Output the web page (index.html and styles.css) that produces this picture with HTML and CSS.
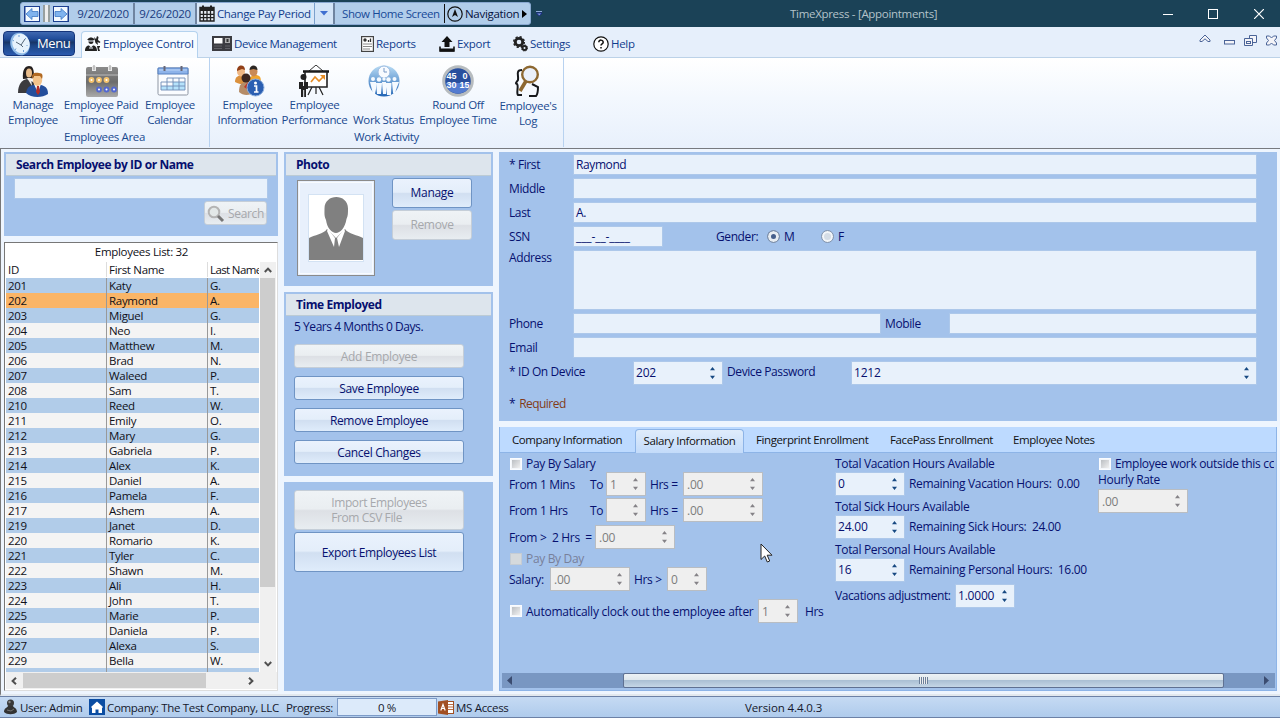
FILE: index.html
```html
<!DOCTYPE html>
<html lang="en">
<head>
<meta charset="utf-8">
<title>TimeXpress - [Appointments]</title>
<link rel="stylesheet" href="styles.css">
</head>
<body>
<svg class="defs" width="0" height="0">
  <defs>
    <linearGradient id="blueGrad" x1="0" y1="0" x2="0" y2="1"><stop offset="0" stop-color="#b9dcf5"/><stop offset="1" stop-color="#1f63b4"/></linearGradient>
    <linearGradient id="grayGrad" x1="0" y1="0" x2="0" y2="1"><stop offset="0" stop-color="#8b8b8b"/><stop offset=".5" stop-color="#6c6c6c"/><stop offset="1" stop-color="#aaaaaa"/></linearGradient>
    <symbol id="updown" viewBox="0 0 7 14"><path d="M3.500 1L6 4.200H1zM3.500 13L1 9.800h5z"/></symbol>
    <symbol id="chev" viewBox="0 0 8 6"><path d="M.8 5L4 1.600 7.200 5" fill="none" stroke="#505050" stroke-width="2"/></symbol>
  </defs>
</svg>
<div class="window">
  <header class="titlebar">
    <div class="qat">
      <svg class="q-arrow" viewBox="0 0 16 16"><rect width="16" height="16" fill="#1b3f91"/><rect x="1.500" y="1" width="13.500" height="14" fill="#f4faff"/><path d="M2 8l6-5.500v3h6v5H8v3z" fill="#7fb3ee" stroke="#3d79c4" stroke-width=".8"/></svg>
      <span class="q-grip"></span>
      <svg class="q-arrow" viewBox="0 0 16 16"><rect width="16" height="16" fill="#1b3f91"/><rect x="1" y="1" width="13.500" height="14" fill="#f4faff"/><path d="M14 8L8 2.500v3H2v5h6v3z" fill="#7fb3ee" stroke="#3d79c4" stroke-width=".8"/></svg>
      <span class="q-date">9/20/2020</span><i class="q-sep"></i>
      <span class="q-date q-date2">9/26/2020</span><i class="q-sep"></i>
      <span class="q-period">
        <svg width="16" height="17" viewBox="0 0 16 17"><path d="M1 2.500h14V16H1z" fill="#e9eef5" stroke="#222" stroke-width="1.400"/><path d="M1 2.500h14v3.500H1zM3 .5h2v3H3zM11 .5h2v3h-2z" fill="#222"/><path d="M1 9.300h14M1 12.700h14M4.500 6v10M8 6v10M11.500 6v10" stroke="#222" stroke-width="1.300"/></svg>
        <span>Change Pay Period</span>
      </span>
      <span class="q-drop"><svg width="8" height="5" viewBox="0 0 8 5"><path d="M0 0h8L4 4.500z" fill="#3f6fd0"/></svg></span>
      <i class="q-sep q-sep2"></i>
      <span class="q-home">Show Home Screen</span><i class="q-sep3"></i>
      <svg class="q-nav-icon" width="16" height="16" viewBox="0 0 16 16"><circle cx="8" cy="8" r="7.200" fill="none" stroke="#111" stroke-width="1.200"/><path d="M8 3l3 8-3-2-3 2z" fill="#111"/></svg>
      <span class="q-nav">Navigation</span>
      <svg width="5" height="8" viewBox="0 0 5 8"><path d="M0 0l5 4-5 4z" fill="#000"/></svg>
    </div>
    <svg class="q-more" width="7" height="6" viewBox="0 0 7 6"><path d="M0 .5h6" stroke="#8fa9d8"/><path d="M.5 2h5.500L3.300 5z" stroke="#14218a" fill="#7f9ad0" stroke-width=".8"/></svg>
    <span class="title">TimeXpress - [Appointments]</span>
    <div class="winbtns">
      <svg width="10" height="10" viewBox="0 0 10 10"><path d="M0 5.500h10" stroke="#fff"/></svg>
      <svg width="10" height="10" viewBox="0 0 10 10"><rect x=".5" y=".5" width="9" height="9" fill="none" stroke="#fff"/></svg>
      <svg width="10" height="10" viewBox="0 0 10 10"><path d="M0 0l10 10M10 0L0 10" stroke="#fff" stroke-width="1.200"/></svg>
    </div>
  </header>

  <nav class="tabs">
    <span class="menu"><svg width="24" height="24" viewBox="0 0 24 24"><ellipse cx="12" cy="12" rx="9.500" ry="11.500" transform="rotate(-20 12 12)" fill="#8ebbe8"/><ellipse cx="13" cy="11.500" rx="8.500" ry="10" transform="rotate(-20 13 11.500)" fill="#e6f2fc"/><path d="M8 10l5 3 4-6M13 13l2 2" fill="none" stroke="#567" stroke-width="1"/><path d="M11 3v2M4.500 8l1.500 1M7 18l1-1.500M15.500 20v-2M19.500 14l-1-1M18 6l-1 1" stroke="#6fa0d4"/></svg>Menu</span>
    <span class="tab-active"><svg width="16" height="16" viewBox="0 0 16 16"><path d="M3 3c1-2 5-2 6 0l.8 1H8.500c.3 3-1 4-2.500 4S3.200 7 3.300 4H2z" fill="#222"/><path d="M0 15c0-4 2-5.500 4-5.500l2 2 2-2c2 0 4 1.500 4 5.500z" fill="#222"/><path d="M9 1l2 2 1-3 1.500 1L13 4l2.500 2-1 1-2-1 .5 3-2.500-2zM12 10h3v1l-1 1 1 3h-2z" fill="#222"/><path d="M3 5h6M4 12h4" stroke="#edf4fc"/></svg>Employee Control</span>
    <span class="tab t-device"><svg width="20" height="15" viewBox="0 0 20 15"><rect width="20" height="15" fill="#3b3b40"/><rect x="2" y="2" width="8.500" height="5.500" fill="#fff"/><rect x="13" y="2" width="5" height="5" fill="#aaa"/><rect x="14.500" y="3" width="2" height="3" fill="#333"/><path d="M2 10h8M2 12.500h8M13 10h5M13 12.500h5" stroke="#6c6c72" stroke-width=".8"/></svg>Device Management</span>
    <span class="tab t-reports"><svg width="13" height="16" viewBox="0 0 13 16"><rect x=".6" y=".6" width="11.800" height="14.800" fill="#fff" stroke="#444" stroke-width="1.200"/><circle cx="4" cy="4" r="1.700" fill="#333"/><path d="M7.500 6V4M9.500 6V2.500" stroke="#333" stroke-width="1.300"/><path d="M2 8h9M2 10.500h9M2 13h7" stroke="#888"/></svg>Reports</span>
    <span class="tab t-export"><svg width="16" height="16" viewBox="0 0 16 16"><path d="M8 0l5.500 6H10.500v5h-5V6H2.500z" fill="#111"/><path d="M1 10.500V15h14v-4.500" fill="none" stroke="#111" stroke-width="1.600"/><path d="M1 14h14" stroke="#111" stroke-width="3"/></svg>Export</span>
    <span class="tab t-settings"><svg width="15" height="16" viewBox="0 0 15 16"><circle cx="6" cy="6" r="3.700" fill="none" stroke="#222" stroke-width="2.800"/><circle cx="6" cy="6" r="5.300" fill="none" stroke="#222" stroke-width="1.500" stroke-dasharray="2.200 1.960"/><circle cx="11.500" cy="12" r="2" fill="#e6effb" stroke="#222" stroke-width="2"/><circle cx="11.500" cy="12" r="3" fill="none" stroke="#222" stroke-dasharray="1.300 1.050"/></svg>Settings</span>
    <span class="tab t-help"><svg width="16" height="16" viewBox="0 0 16 16"><circle cx="8" cy="8" r="7.200" fill="#fff" stroke="#111" stroke-width="1.200"/><path d="M5.800 6.300c0-3 4.500-2.800 4.400 0C10.200 8 8 7.800 8 9.600M8 11v1.500" fill="none" stroke="#111" stroke-width="1.500"/></svg>Help</span>
    <svg class="mdi" width="80" height="14" viewBox="0 0 80 14"><g fill="#f4f4f8" stroke="#4b6498"><path d="M1 7l5-5 5 5v1.500H9L6 5.800 3 8.500H1z"/><rect x="25.500" y="7.500" width="10" height="3.500"/><path d="M50.500 2.500h7v7h-7z"/><path d="M45.500 5.500h8v7h-8z"/><rect x="47.500" y="8.500" width="4" height="2"/><path d="M67.500 3h3l2 2 2-2h3v2l-2 2.500 2 2.500v2h-3l-2-2-2 2h-3v-2l2-2.500-2-2.500z"/></g></svg>
  </nav>

  <section class="ribbon">
    <div class="group g1">
      <div class="items">
        <div class="item i1"><svg width="32" height="32" viewBox="0 0 32 32"><path d="M6 14C5 5 8 1 12 1s5 3 5 12z" fill="#25201f"/><ellipse cx="12" cy="8" rx="3" ry="4.500" fill="#e9bd8c"/><path d="M1 28c0-9 4-13 9-14l8 4v10z" fill="#3b3b3e"/><path d="M10 13h4l1 8z" fill="#f2ede8"/><path d="M9 28c1-6 4-8 9-8h6c5 1 7 4 7 9-6 4-17 4-22-1z" fill="#234e9c"/><path d="M17 19h7l-3 9z" fill="#fff"/><path d="M20 21h2l1 6-2 3-2-3z" fill="#b42d25"/><ellipse cx="20.500" cy="15" rx="4.700" ry="6" fill="#f3c38a"/><path d="M15 14c-1-6 3-7 7-6 4 0 4 3 3 6l-2-3-6 0z" fill="#b16922"/></svg><span>Manage<br>Employee</span></div>
        <div class="item i2"><svg width="32" height="32" viewBox="0 0 32 32"><rect y="2" width="32" height="30" rx="2" fill="url(#grayGrad)"/><path d="M0 10h32" stroke="#bbb"/><path d="M8 1v5M24 1v5" stroke="#e8e8e8" stroke-width="4"/><path d="M8 0v5M24 0v5" stroke="#999"/><g fill="#f4c36d"><circle cx="5.500" cy="15" r="2.900"/><circle cx="13" cy="15" r="2.900"/><circle cx="20.500" cy="15" r="2.900"/></g><g fill="#5268d0"><circle cx="13" cy="24.500" r="2.900"/><circle cx="20.500" cy="24.500" r="2.900"/><circle cx="28" cy="24.500" r="2.900"/></g><g fill="#fff"><circle cx="5.500" cy="15" r="1"/><circle cx="13" cy="15" r="1"/><circle cx="20.500" cy="15" r="1"/><circle cx="13" cy="24.500" r="1"/><circle cx="20.500" cy="24.500" r="1"/><circle cx="28" cy="24.500" r="1"/></g></svg><span>Employee Paid<br>Time Off</span></div>
        <div class="item i3"><svg width="32" height="32" viewBox="0 0 32 32"><rect x="1" y="3" width="30" height="27" rx="1.500" fill="#fafcff" stroke="#8e96a3"/><path d="M1 3h30v6H1z" fill="#8db3ea" stroke="#5580c2"/><path d="M2 5h28" stroke="#bcd5f7"/><path d="M7.500 1v5M24.500 1v5" stroke="#667" stroke-width="2"/><path d="M4 21h24v4H4zM16 17h12v4H16z" fill="#b5e2fb"/><path d="M10 13h18v12H4v-8h24M4 21h24M10 13v12M16 13v12M22 13v12" fill="none" stroke="#6f8db5" stroke-width=".9"/></svg><span>Employee<br>Calendar</span></div>
      </div>
      <div class="caption">Employees Area</div>
    </div>
    <div class="group g2">
      <div class="items">
        <div class="item i4"><svg width="32" height="32" viewBox="0 0 32 32"><path d="M1 17c0-5 3-7 8-7s8 2 8 8c-5 2-11 2-16-1z" fill="#db913d"/><path d="M15 17c0-5 3-7 6-7 5 0 6 2 6 8z" fill="#f0a52d"/><ellipse cx="7" cy="6.500" rx="4" ry="5" fill="#efb783"/><path d="M3 6c0-7 8-7 8-1L8 4z" fill="#913f18"/><ellipse cx="19.500" cy="6.500" rx="4" ry="5" fill="#c98a55"/><path d="M15.500 5c0-6 8-6 8 0l-4-1z" fill="#2b2623"/><path d="M5 27c0-8 3-10 8-10s7 4 7 10c-4 4-11 4-15 0z" fill="#b58c68"/><circle cx="12" cy="13" r="4.500" fill="#3d2720"/><path d="M10 22l4-5 2 9z" fill="#c03525"/><circle cx="21.500" cy="22.500" r="8.500" fill="#2b5fb2" stroke="#8fb1de"/><circle cx="21.500" cy="18" r="1.500" fill="#fff"/><path d="M20 21h2.500v6M20 27h4.500" fill="none" stroke="#fff" stroke-width="1.700"/></svg><span>Employee<br>Information</span></div>
        <div class="item i5"><svg width="32" height="32" viewBox="0 0 32 32"><path d="M10 6l7-6 7 6" fill="none" stroke="#333"/><path d="M4 6.500h26" stroke="#111" stroke-width="2.500"/><path d="M6 7v15h22V7z" fill="#fff" stroke="#222" stroke-width="1.600"/><path d="M12 17l4-5 4 4 5-5" fill="none" stroke="#e68d25" stroke-width="1.600"/><path d="M21 10h5v5z" fill="#e68d25"/><path d="M13 22l-4 8M20 22l4 8M17 22v7" stroke="#222" stroke-width="1.200"/><circle cx="4.500" cy="12" r="3" fill="#222"/><path d="M0 24v-7h9v7H7v8H5.200v-7h-1v7H2v-8z" fill="#222"/><path d="M4.500 17v4" stroke="#eee"/></svg><span>Employee<br>Performance</span></div>
        <div class="item i6"><svg width="32" height="32" viewBox="0 0 32 32"><circle cx="16" cy="16" r="15.500" fill="url(#blueGrad)"/><circle cx="16" cy="7" r="6" fill="#f8fbff" stroke="#9dbbe0"/><path d="M16 3v4h3" fill="none" stroke="#7898c5"/><g fill="#f5faff"><circle cx="5" cy="14" r="2"/><path d="M2 17h6v7l-1 5H5z"/><circle cx="11" cy="14.500" r="2.200"/><path d="M8 18h6l-1 11H9z"/><circle cx="20.500" cy="14.500" r="2.200"/><path d="M17.500 18h6l-.5 12h-4z"/><circle cx="26.500" cy="14" r="2"/><path d="M24 17h7l-2 5-2 6h-2z"/><circle cx="16" cy="14" r="1.700"/><path d="M14 17h4v12h-3z"/></g></svg><span><br>Work Status</span></div>
        <div class="item i7"><svg width="32" height="32" viewBox="0 0 32 32"><circle cx="16" cy="16" r="14.300" fill="#294f9e" stroke="#b7bcbf" stroke-width="3"/><path d="M4 18h24c-1 14-23 14-24 0" fill="#537bd0"/><g class="dial"><text x="4.500" y="14">45</text><text x="20.500" y="14">0</text><text x="4.500" y="23">30</text><text x="17.500" y="23">15</text></g></svg><span>Round Off<br>Employee Time</span></div>
        <div class="item i8"><svg width="32" height="32" viewBox="0 0 32 32"><path d="M10 5C3 5 7 11 6 15c-2 3-3 3-1 4 2 2-1 9 1 11h4M17 31h7c2-2 2-6 2-9l-6-3" fill="none" stroke="#17191c" stroke-width="2"/><circle cx="18" cy="9.500" r="7.800" fill="#eaf0fa" stroke="#8d6831" stroke-width="2.400"/><path d="M14 16L8 26" stroke="#8d6831" stroke-width="3.600"/></svg><span>Employee's<br>Log</span></div>
      </div>
      <div class="caption">Work Activity</div>
    </div>
  </section>

  <main class="workspace">
    <div class="col-left">
      <section class="panel search-panel">
        <h2>Search Employee by ID or Name</h2>
        <div class="field search-input"></div>
        <div class="btn disabled search-btn"><svg width="18" height="18" viewBox="0 0 18 18"><circle cx="7" cy="7" r="5.300" fill="#e3e8e8" stroke="#b4b4b4" stroke-width="2"/><path d="M11 11l5 5" stroke="#777" stroke-width="3"/></svg>Search</div>
      </section>
      <section class="list">
        <div class="list-title">Employees List: 32</div>
        <div class="list-body">
          <div class="list-grid">
            <div class="lr head"><span>ID</span><span>First Name</span><span>Last Name</span></div>
            <div class="lr"><span>201</span><span>Katy</span><span>G.</span></div>
            <div class="lr selected"><span>202</span><span>Raymond</span><span>A.</span></div>
            <div class="lr"><span>203</span><span>Miguel</span><span>G.</span></div>
            <div class="lr"><span>204</span><span>Neo</span><span>I.</span></div>
            <div class="lr"><span>205</span><span>Matthew</span><span>M.</span></div>
            <div class="lr"><span>206</span><span>Brad</span><span>N.</span></div>
            <div class="lr"><span>207</span><span>Waleed</span><span>P.</span></div>
            <div class="lr"><span>208</span><span>Sam</span><span>T.</span></div>
            <div class="lr"><span>210</span><span>Reed</span><span>W.</span></div>
            <div class="lr"><span>211</span><span>Emily</span><span>O.</span></div>
            <div class="lr"><span>212</span><span>Mary</span><span>G.</span></div>
            <div class="lr"><span>213</span><span>Gabriela</span><span>P.</span></div>
            <div class="lr"><span>214</span><span>Alex</span><span>K.</span></div>
            <div class="lr"><span>215</span><span>Daniel</span><span>A.</span></div>
            <div class="lr"><span>216</span><span>Pamela</span><span>F.</span></div>
            <div class="lr"><span>217</span><span>Ashem</span><span>A.</span></div>
            <div class="lr"><span>219</span><span>Janet</span><span>D.</span></div>
            <div class="lr"><span>220</span><span>Romario</span><span>K.</span></div>
            <div class="lr"><span>221</span><span>Tyler</span><span>C.</span></div>
            <div class="lr"><span>222</span><span>Shawn</span><span>M.</span></div>
            <div class="lr"><span>223</span><span>Ali</span><span>H.</span></div>
            <div class="lr"><span>224</span><span>John</span><span>T.</span></div>
            <div class="lr"><span>225</span><span>Marie</span><span>P.</span></div>
            <div class="lr"><span>226</span><span>Daniela</span><span>P.</span></div>
            <div class="lr"><span>227</span><span>Alexa</span><span>S.</span></div>
            <div class="lr"><span>229</span><span>Bella</span><span>W.</span></div>
            <div class="lr"><span></span><span></span><span></span></div>
          </div>
          <div class="vscroll"><svg width="8" height="6"><use href="#chev"/></svg><i></i><svg class="down" width="8" height="6"><use href="#chev"/></svg></div>
        </div>
        <div class="hscroll"><svg class="left" width="8" height="6"><use href="#chev"/></svg><i></i><svg class="right" width="8" height="6"><use href="#chev"/></svg></div>
      </section>
    </div>

    <div class="col-mid">
      <section class="panel photo-panel">
        <h2>Photo</h2>
        <div class="photo-row">
          <div class="photo"><svg width="54" height="66" viewBox="0 0 54 66"><rect width="54" height="66" fill="#fff"/><path d="M0 65V43c5-3 15-4 18-9l9 9 9-9c3 5 13 6 18 9v22z" fill="#808080"/><path d="M19 34l-1 2 7 16 1-9zM35 34l1 2-6 16-2-9z" fill="#fff"/><path d="M15.500 14C15-2 39.500-2 39 14c0 4 0 7-1.500 10C36 33 31 38 27 38s-9-5-10-13c-2-4-1.500-7-1.500-11z" fill="#808080"/></svg></div>
          <div class="photo-btns"><div class="btn">Manage</div><div class="btn disabled">Remove</div></div>
        </div>
      </section>
      <section class="panel time-panel">
        <h2>Time Employed</h2>
        <p>5 Years 4 Months 0 Days.</p>
        <div class="stack"><div class="btn disabled">Add Employee</div><div class="btn">Save Employee</div><div class="btn">Remove Employee</div><div class="btn">Cancel Changes</div></div>
      </section>
      <section class="panel io-panel">
        <div class="btn disabled tall"><span>Import Employees<br>From CSV File</span></div>
        <div class="btn tall">Export Employees List</div>
      </section>
    </div>

    <div class="col-right">
      <section class="panel form">
        <div class="fr"><label>* First</label><div class="field">Raymond</div></div>
        <div class="fr"><label>Middle</label><div class="field"></div></div>
        <div class="fr"><label>Last</label><div class="field">A.</div></div>
        <div class="fr ssn"><label>SSN</label><div class="field ssn-mask">___-__-____</div><label>Gender:</label><i class="radio on"></i><label>M</label><i class="radio"></i><label>F</label></div>
        <div class="fr address"><label>Address</label><div class="field"></div></div>
        <div class="fr phone"><label>Phone</label><div class="field"></div><label>Mobile</label><div class="field"></div></div>
        <div class="fr"><label>Email</label><div class="field"></div></div>
        <div class="fr device"><label>* ID On Device</label><div class="field spin">202<svg><use href="#updown"/></svg></div><label>Device Password</label><div class="field spin">1212<svg><use href="#updown"/></svg></div></div>
        <div class="required"><label>*</label><span>Required</span></div>
      </section>

      <section class="tabpanel">
        <div class="strip"><span class="s1">Company Information</span><span class="s2 on">Salary Information</span><span class="s3">Fingerprint Enrollment</span><span class="s4">FacePass Enrollment</span><span class="s5">Employee Notes</span></div>
        <div class="tabbody">
          <div class="pay">
            <div class="pr check"><i class="box"></i><span>Pay By Salary</span></div>
            <div class="pr r1"><span>From 1 Mins</span><span>To</span><div class="spin off">1<svg><use href="#updown"/></svg></div><span>Hrs =</span><div class="spin off">.00<svg><use href="#updown"/></svg></div></div>
            <div class="pr r2"><span>From 1 Hrs</span><span>To</span><div class="spin off"><b></b><svg><use href="#updown"/></svg></div><span>Hrs =</span><div class="spin off">.00<svg><use href="#updown"/></svg></div></div>
            <div class="pr r3"><span>From &gt;&nbsp; 2 Hrs&nbsp; =</span><div class="spin off">.00<svg><use href="#updown"/></svg></div></div>
            <div class="pr check dim"><i class="box"></i><span>Pay By Day</span></div>
            <div class="pr r4"><span>Salary:</span><div class="spin off">.00<svg><use href="#updown"/></svg></div><span>Hrs &gt;</span><div class="spin off">0<svg><use href="#updown"/></svg></div></div>
            <div class="pr r5"><i class="box"></i><span class="auto">Automatically clock out the employee after</span><div class="spin off">1<svg><use href="#updown"/></svg></div><span>Hrs</span></div>
          </div>
          <div class="hours">
            <span>Total Vacation Hours Available</span>
            <div class="hr"><div class="field spin">0<svg><use href="#updown"/></svg></div><span>Remaining Vacation Hours:&nbsp; 0.00</span></div>
            <span>Total Sick Hours Available</span>
            <div class="hr"><div class="field spin">24.00<svg><use href="#updown"/></svg></div><span>Remaining Sick Hours:&nbsp; 24.00</span></div>
            <span>Total Personal Hours Available</span>
            <div class="hr"><div class="field spin">16<svg><use href="#updown"/></svg></div><span>Remaining Personal Hours:&nbsp; 16.00</span></div>
            <div class="hr adj"><span>Vacations adjustment:</span><div class="field spin">1.0000<svg><use href="#updown"/></svg></div></div>
          </div>
          <div class="rate">
            <div class="pr check"><i class="box"></i><span>Employee work outside this cc</span></div>
            <span>Hourly Rate</span>
            <div class="spin off">.00<svg><use href="#updown"/></svg></div>
          </div>
          <svg class="cursor" width="13" height="20" viewBox="0 0 13 20"><path d="M1 1v15.500l3.700-3.500 2.600 6 2.400-1-2.500-5.800H12z" fill="#fff" stroke="#222"/></svg>
        </div>
        <div class="panscroll"><svg width="5" height="9"><path d="M5 0v9L0 4.500z" fill="#3b4c70"/></svg><i><b></b></i><svg width="5" height="9"><path d="M0 0v9l5-4.500z" fill="#3b4c70"/></svg></div>
      </section>
    </div>
  </main>

  <footer class="status">
    <svg class="s-user" width="13" height="16" viewBox="0 0 13 16"><circle cx="6.500" cy="4" r="3.500" fill="#393939"/><path d="M0 13c0-4 3-4 4-6h5c1 2 4 2 4 6-3 3-10 3-13 0z" fill="#333"/><circle cx="5.500" cy="3" r="1.200" fill="#888"/><path d="M3 11l4 1 3-2" fill="none" stroke="#777"/></svg>
    <span class="w-user">User: Admin</span>
    <svg class="s-home" width="16" height="16" viewBox="0 0 16 16"><rect width="16" height="16" fill="#0b4da3"/><path d="M8 2.500L14 8l-1 .9V14H9.500v-3.500h-3V14H3V8.900L2 8z" fill="#fff"/></svg>
    <span class="w-company">Company: The Test Company, LLC</span>
    <span class="w-progress">Progress:</span>
    <div class="progress">0 %</div>
    <svg class="s-access" width="16" height="15" viewBox="0 0 16 15"><rect x="8" y="1.500" width="7.500" height="12" fill="#fff" stroke="#a24f22"/><path d="M10 4.500h5M10 7h5M10 9.500h5" stroke="#b86f48"/><path d="M0 1.500L10 0v15L0 13.500z" fill="#a24f22"/><path d="M2.800 10.500L5 4.500l2.200 6M3.500 8.500h3" stroke="#fff" fill="none" stroke-width="1.200"/></svg>
    <span class="w-access">MS Access</span>
    <span class="version">Version 4.4.0.3</span>
  </footer>
</div>
</body>
</html>
```

FILE: styles.css
```css
* { box-sizing: border-box; }
body { margin: 0; font: 12px/15px "Open Sans", "Noto Sans", sans-serif; letter-spacing: -0.33px; color: #06106f; white-space: nowrap; overflow: hidden; }
svg { flex: none; display: block; }
.defs { position: absolute; }
.window { width: 1280px; height: 720px; display: flex; flex-direction: column; background: #fff; overflow: hidden; }
.window > * { flex: none; }

.titlebar { height: 27px; background: #1b4257; display: flex; align-items: flex-start; padding-left: 20px; color: #1a3c80; font-size: 11.5px; letter-spacing: -0.3px; }
.titlebar > * { flex: none; }
.qat { width: 511px; height: 23px; margin-top: 2px; border: 1px solid #8aa9d2; border-radius: 3px; background: #b1cdea; display: flex; align-items: center; padding-left: 3px; }
.qat > * { flex: none; }
.q-arrow { width: 16px; height: 16px; }
.q-grip { width: 7px; height: 17px; margin: 0 3px; border: solid #98a0a0; border-width: 0 2px; background: #eee; }
.q-date { width: 64px; text-align: center; letter-spacing: -0.35px; padding-left: 4px; }
.q-date2 { width: 60px; padding-left: 0; }
.q-sep { width: 2px; height: 21px; background: #6f84a0; }
.q-period { width: 118px; height: 21px; background: #d8e7f8; display: flex; align-items: center; gap: 2px; padding-left: 2px; border-right: 1px solid #7ba0cc; color: #123d8c; letter-spacing: -0.4px; }
.q-drop { width: 18px; height: 21px; background: #d3e4f7; display: flex; align-items: center; justify-content: center; }
.q-home { width: 109px; padding-left: 7px; color: #184a98; letter-spacing: -0.4px; }
.q-sep3 { width: 1px; height: 19px; background: #111; }
.q-nav-icon { margin: 0 2px; }
.q-nav { color: #06103c; width: 57px; }
.q-more { margin: 11px 0 0 5px; }
.title { margin-left: 247px; width: 373px; padding-top: 6px; color: #b4c2ca; }
.winbtns { display: flex; gap: 35px; margin-top: 9px; }
.winbtns svg:nth-child(3) { margin-left: 1px; }

.tabs { height: 31px; background: #e6effb; border-bottom: 1px solid #bcd2e8; display: flex; align-items: flex-start; color: #103d8e; font-size: 11.5px; letter-spacing: -0.3px; }
.tabs > * { flex: none; }
.menu { margin: 4px 0 0 3px; width: 72px; height: 25px; border: 1px solid #15357a; border-radius: 4px; background: linear-gradient(#3f68b0, #214d9a 30%, #173668 45%, #1c4687 60%, #2b5aae); display: flex; align-items: center; gap: 5px; padding-left: 4px; color: #fff; font-size: 13px; letter-spacing: -0.4px; }
.tab-active { margin: 4px 0 0 6px; width: 117px; height: 27px; border: 1px solid #b4d2ee; border-bottom: 0; border-radius: 4px 4px 0 0; background: #f7fbff; display: flex; gap: 2px; align-items: center; padding: 0 0 3px 3px; }
.tab { height: 33px; display: flex; align-items: center; gap: 2px; }
.t-device { margin-left: 14px; width: 149px; letter-spacing: -0.4px; }
.t-reports { width: 78px; }
.t-export { width: 74px; }
.t-settings { width: 80px; }
.t-help { width: 60px; }
.mdi { margin: 6px 0 0 546px; }

.ribbon { height: 91px; background: linear-gradient(#fff, #f3f8fe 45%, #e8f0fc); border-bottom: 1px solid #777a80; display: flex; color: #19498f; font-size: 11.5px; letter-spacing: -0.35px; }
.group { border-right: 1px solid #b8d2f0; height: 89px; }
.g1 { width: 210px; }
.g2 { width: 354px; }
.items { display: flex; height: 71px; padding-top: 7px; }
.g1 .items { padding-left: 4px; }
.g2 .items { padding-left: 7px; }
.item { display: flex; flex-direction: column; align-items: center; text-align: center; flex: none; }
.i1 { width: 58px; } .i2 { width: 78px; } .i3 { width: 60px; }
.i2 svg { margin-left: 2px; } .i3 svg { margin-left: 5px; } .i4 svg { margin-left: 4px; }
.i4 { width: 61px; } .i5 { width: 73px; } .i6 { width: 65px; } .i7 { width: 84px; } .i8 { width: 56px; gap: 1px; }
.caption { text-align: center; }
.dial { fill: #fff; font: bold 9px "Liberation Sans", sans-serif; letter-spacing: 0; }

.workspace { height: 547px; background: #eef5fe; border-left: 1px solid #777; display: flex; gap: 6px; padding: 3px; border-bottom: 2px solid #e2e8ee; }
.workspace > * { flex: none; }
.panel { background: #a3c2eb; }
.panel h2 { margin: 0; height: 22px; background: #dde5ed; border-bottom: 1px solid #bccbd5; font-size: 12px; line-height: 22px; letter-spacing: -0.44px; padding-left: 10px; }
.field { background: #e8f1fb; border: 1px solid #adc8ea; height: 21px; line-height: 19px; padding-left: 2px; }
.btn { display: flex; align-items: center; justify-content: center; border: 1px solid #6f94c4; border-radius: 3px; background: linear-gradient(#eaf2fd, #e4eefa 47%, #d1dff1 52%, #dfecfb); }
.btn.disabled { color: #a6a8ac; border-color: #c5ced8; background: linear-gradient(#eff3f6, #eaeef1 47%, #dde0e5 52%, #e8edf1); }
.col-left { width: 274px; display: flex; flex-direction: column; gap: 6px; }
.search-panel { height: 84px; padding: 2px; display: flex; flex-direction: column; }
.search-input { margin: 2px 8px 2px 8px; }
.search-btn { width: 63px; height: 24px; margin: 0 9px 0 0; align-self: flex-end; gap: 3px; padding-top: 1px; }
.list { height: 449px; background: #fff; border: 1px solid #777; border-right-color: #ddd; border-bottom-color: #ddd; color: #101018; padding-left: 1px; font-size: 11.5px; letter-spacing: -0.3px; }
.list-title { height: 19px; line-height: 18px; text-align: center; }
.list-body { display: flex; height: 410px; }
.list-grid { width: 253px; height: 410px; overflow: hidden; }
.lr { display: grid; grid-template-columns: 101px 101px 51px; height: 15px; line-height: 16px; background: #f4f4f4; }
.lr:nth-child(even) { background: #b1cce9; }
.lr.selected { background: #fab567; }
.lr span { padding-left: 2px; border-right: 1px solid #999; overflow: hidden; height: 15px; }
.lr span:last-child { border-right: 0; }
.lr.head { height: 16px; line-height: 15px; background: #fff; }
.lr.head span { border-color: #ddd; }
.lr.head span:last-child { letter-spacing: -0.62px; }
.vscroll { margin-left: 1px; width: 16px; background: #f0f0f0; display: flex; flex-direction: column; align-items: center; padding: 5px 1px 5px 0; }
.vscroll i { width: 15px; height: 309px; background: #cdcdcd; margin-top: 5px; }
.down { margin-top: auto; transform: rotate(180deg); }
.hscroll { height: 17px; background: #f0f0f0; display: flex; align-items: center; padding-left: 4px; }
.left { transform: rotate(-90deg); }
.right { transform: rotate(90deg); margin-left: 41px; }
.hscroll i { width: 183px; height: 15px; background: #cdcdcd; margin-left: 5px; }

.col-mid { width: 209px; display: flex; flex-direction: column; gap: 6px; }
.photo-panel { height: 134px; padding: 2px; }
.photo-row { display: flex; padding-left: 11px; }
.photo { width: 78px; height: 96px; margin-top: 4px; border: 1px solid #8b8b8b; outline: 1px solid #f8fbff; outline-offset: -3px; background: #e8f0fc; display: flex; align-items: center; justify-content: center; }
.photo svg { outline: 1px solid #d3e2f3; }
.photo-btns { display: flex; flex-direction: column; gap: 2px; margin: 2px 0 0 17px; }
.photo-btns .btn { width: 80px; height: 30px; padding-bottom: 1px; }
.time-panel { height: 184px; padding: 2px; }
.time-panel p { margin: 3px 0 0 8px; height: 15px; letter-spacing: -0.45px; }
.stack { display: flex; flex-direction: column; gap: 8px; margin: 10px 0 0 8px; }
.stack .btn { width: 170px; height: 24px; }
.io-panel { height: 209px; padding: 8px 0 0 10px; display: flex; flex-direction: column; gap: 2px; }
.tall { width: 170px; height: 40px; letter-spacing: -0.4px; }

.col-right { width: 778px; display: flex; flex-direction: column; gap: 6px; }
.form { height: 269px; padding: 2px 20px 0 10px; display: flex; flex-direction: column; gap: 3px; letter-spacing: -0.4px; }
.fr { display: grid; grid-template-columns: 64px 1fr; height: 21px; line-height: 21px; }
.ssn { grid-template-columns: 64px 90px 53px 51px 16px 38px 16px 20px; }
.ssn label:nth-of-type(2) { grid-column: 4; }
.ssn label:nth-of-type(3), .ssn label:nth-of-type(4) { padding-left: 1px; }
.radio { width: 13px; height: 13px; margin-top: 4px; border-radius: 50%; border: 1px solid #8293ac; background: #d5dde6; box-shadow: inset 0 0 0 2px #f3f6f9; }
.radio.on { background: #465f8b; box-shadow: inset 0 0 0 3px #e8edf2; }
.ssn-mask { letter-spacing: -0.1px; }
.address { height: 60px; line-height: 15px; }
.address .field { height: 60px; }
.phone { grid-template-columns: 64px 308px 68px 1fr; }
.phone label:nth-of-type(2) { padding-left: 4px; }
.device { grid-template-columns: 124px 90px 128px 1fr; height: 24px; line-height: 22px; }
.device label:nth-of-type(2) { padding-left: 4px; }
.device .field { height: 24px; line-height: 20px; }
.spin { display: flex; justify-content: space-between; align-items: center; padding-right: 6px; height: 24px; letter-spacing: -0.2px; }
.spin svg { width: 7px; height: 14px; fill: #174982; }
.off { background: #efefef; border: 1px solid #b9bdc2; color: #7d7d7d; padding-left: 3px; }
.off svg { fill: #858287; }
.required { display: flex; padding-top: 8px; gap: 4px; }
.required span { color: #823b18; letter-spacing: -0.55px; }

.tabpanel { height: 264px; background: #a3c2eb; border: 1px solid #8db4e7; border-top: 0; }
.strip { height: 26px; background: #bddaff; border-bottom: 1px solid #8db4e7; color: #111; display: flex; line-height: 25px; font-size: 11.5px; letter-spacing: -0.4px; }
.strip span { flex: none; }
.s1 { width: 135px; padding-left: 12px; }
.s2 { width: 109px; height: 24px; margin-top: 2px; line-height: 21px; text-align: center; border: 1px solid #8db4e7; border-bottom: 0; border-radius: 4px 4px 0 0; background: linear-gradient(#dfecfb, #c3dbfa); }
.s3 { width: 146px; padding-left: 12px; }
.s4 { width: 123px; }
.s5 { width: 100px; }
.tabbody { position: relative; display: grid; grid-template-columns: 326px 263px 176px; padding-left: 9px; height: 219px; overflow: hidden; }
.pay { display: flex; flex-direction: column; }
.pr { display: grid; align-items: center; height: 24px; flex: none; }
.check { grid-template-columns: 17px 1fr; height: 15px; margin-top: 3px; }
.box { width: 12px; height: 12px; margin-left: 1px; border: 1px solid #fafcff; background: linear-gradient(135deg, #b4b8bd, #f7f7f7); box-shadow: inset 0 0 0 1px #f3f6fa; }
.dim { color: #78809a; }
.dim .box { background: #d5d9dc; border-color: #c5ccd4; box-shadow: none; }
.r1, .r2 { grid-template-columns: 81px 16px 40px 37px 80px; }
.r1 { margin-top: 1px; } .r2 { margin-top: 2px; }
.r3 { grid-template-columns: 86px 80px; margin-top: 3px; }
.dim.check { margin-top: 2px; }
.r4 { grid-template-columns: 41px 80px 37px 40px; margin-top: 1px; }
.r5 { grid-template-columns: 17px 232px 40px 50px; margin-top: 8px; }
.auto { letter-spacing: -0.26px; }
.r1 span:nth-of-type(3), .r2 span:nth-of-type(3), .r4 span:nth-of-type(2) { padding-left: 4px; }
.r5 span:last-child { padding-left: 7px; }
.hours { display: flex; flex-direction: column; padding-top: 3px; letter-spacing: -0.33px; }
.hours > span { height: 15px; }
.hr { display: grid; grid-template-columns: 74px 1fr; height: 24px; line-height: 22px; margin: 1px 0 3px; }
.hr > .field { width: 70px; line-height: 22px; }
.hr span { line-height: 24px; }
.adj { grid-template-columns: 120px 60px; margin-top: -1px; letter-spacing: -0.4px; }
.adj > .field { width: 60px; }
.rate { overflow: hidden; }
.rate > span { display: block; margin-top: 1px; }
.rate > .spin { width: 90px; margin-top: 2px; }
.cursor { position: absolute; left: 260px; top: 90px; }
.panscroll { height: 15px; margin: 1px 1px 0 2px; background: #7997c2; display: flex; align-items: center; padding: 0 6px 0 5px; }
.panscroll i { width: 601px; height: 15px; margin-left: 111px; margin-right: auto; border: 1px solid #5f7192; border-radius: 2px; background: linear-gradient(#edf2f5, #dfe7ed 45%, #abc0d4 50%, #c5d6e6); display: flex; align-items: center; justify-content: center; }
.panscroll b { width: 9px; height: 7px; background: repeating-linear-gradient(90deg, #6b7f9a 0 1px, #eee 1px 2px); }

.status { height: 22px; border: solid #6c81a6; border-width: 1px 0; background: linear-gradient(#c5daf3, #afcbec); display: flex; align-items: center; color: #14182c; font-size: 11.5px; letter-spacing: -0.32px; }
.status > * { flex: none; }
.s-user { margin-left: 4px; }
.w-user { width: 69px; padding-left: 3px; }
.s-home { margin-left: 3px; }
.w-company { width: 181px; padding-left: 2px; }
.w-progress { width: 51px; }
.progress { width: 100px; height: 18px; border: 1px solid #7d9bc8; background: #dceafa; text-align: center; line-height: 17px; }
.s-access { margin-left: 1px; }
.w-access { width: 291px; padding-left: 2px; }
.version { letter-spacing: -0.1px; }
```
